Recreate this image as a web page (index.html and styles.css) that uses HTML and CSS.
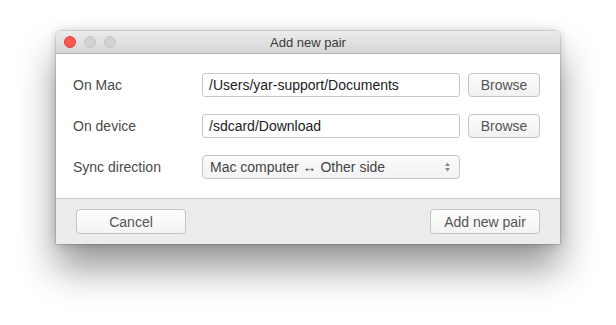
FILE: index.html
```html
<!DOCTYPE html>
<html>
<head>
<meta charset="utf-8">
<link rel="stylesheet" href="styles.css">
</head>
<body>
<div class="stage">
<div class="window">
  <div class="titlebar">
    <div class="lights">
      <span class="light red"></span>
      <span class="light"></span>
      <span class="light"></span>
    </div>
    <div class="title">Add new pair</div>
  </div>
  <div class="content">
    <div class="row">
      <div class="label">On Mac</div>
      <div class="field">/Users/yar-support/Documents</div>
      <div class="btn browse">Browse</div>
    </div>
    <div class="row">
      <div class="label">On device</div>
      <div class="field">/sdcard/Download</div>
      <div class="btn browse">Browse</div>
    </div>
    <div class="row">
      <div class="label">Sync direction</div>
      <div class="select"><span>Mac computer ↔ Other side</span>
        <svg class="arrows" width="7" height="10" viewBox="0 0 7 10"><path d="M3.5 0.5 L6 4 H1 Z M3.5 9.5 L6 6 H1 Z" fill="#8a8a8a"/></svg>
      </div>
    </div>
  </div>
  <div class="footer">
    <div class="btn wide">Cancel</div>
    <div class="btn wide">Add new pair</div>
  </div>
</div>
</div>
</body>
</html>
```
FILE: styles.css
```css
html, body { margin: 0; padding: 0; background: #ffffff; }
body { font-family: "Liberation Sans", Arial, sans-serif; font-size: 14px; }
.stage { width: 616px; height: 325px; padding-top: 31px; box-sizing: border-box; overflow: hidden; }
.window {
  margin: 0 0 0 56px;
  width: 504px;
  border-radius: 5px 5px 0 0;
  box-shadow: 0 24px 38px rgba(0,0,0,0.42), 0 0 10px rgba(0,0,0,0.18), 0 0 0 1px rgba(0,0,0,0.1);
  background: #fff;
}
.titlebar {
  position: relative;
  height: 22px;
  border-radius: 5px 5px 0 0;
  background: linear-gradient(#ececec, #d6d6d6);
  border-bottom: 1px solid #b3b3b3;
  display: flex; align-items: center; justify-content: center;
}
.lights { position: absolute; left: 8px; top: 5px; display: flex; gap: 8px; }
.light { width: 12px; height: 12px; border-radius: 50%; background: #d4d4d4; border: 1px solid #c2c2c2; box-sizing: border-box; }
.light.red { background: #fc5753; border-color: #e0443f; }
.title { color: #3a3a3a; font-size: 13px; }
.content { padding: 19px 20px 19px 17px; display: flex; flex-direction: column; gap: 17px; }
.row { display: flex; align-items: center; height: 24px; }
.label { width: 129px; color: #4a4a4a; font-size: 14px; }
.field {
  box-sizing: border-box; width: 258px; height: 24px;
  border: 1px solid #c6c6c6; border-radius: 3px;
  padding: 0 6px; line-height: 22px; color: #1c1c1c; font-size: 14px;
}
.btn {
  box-sizing: border-box; height: 24px; border: 1px solid #c4c4c4; border-radius: 4px;
  background: linear-gradient(#fcfcfc, #f1f1f1); color: #555; font-size: 14px;
  display: flex; align-items: center; justify-content: center;
}
.browse { width: 72px; margin-left: 8px; }
.select {
  box-sizing: border-box; width: 258px; height: 24px;
  border: 1px solid #c6c6c6; border-radius: 4px;
  background: linear-gradient(#fbfbfb, #f2f2f2);
  padding: 0 8px 0 7px; display: flex; align-items: center; justify-content: space-between;
  color: #444; font-size: 14px;
}
.footer {
  border-top: 1px solid #c9c9c9; background: #ececec;
  height: 46px; box-sizing: border-box;
  padding: 10px 20px 0 20px; display: flex; justify-content: space-between; align-items: flex-start;
}
.wide { width: 110px; height: 25px; background: linear-gradient(#fdfdfd, #f4f4f4); }
```
